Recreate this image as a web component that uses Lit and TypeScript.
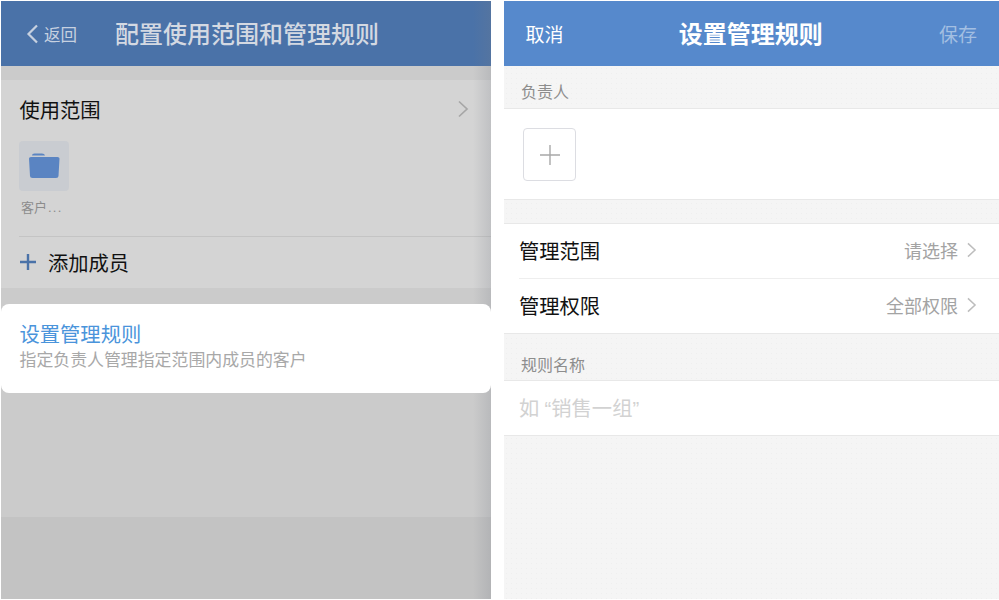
import { LitElement, html, css } from "lit";
import { customElement } from "lit/decorators.js";

const chevron = () => html`<svg viewBox="0 0 12 18" fill="none" stroke="currentColor" stroke-width="1.7"><path d="M2 1.5 L10 9 L2 16.5"/></svg>`;

@customElement("app-root")
export class AppRoot extends LitElement {
  static styles = css`
    :host { display: block; width: 999px; height: 600px; background: #fff; overflow: hidden;
      font-family: "Noto Sans CJK SC", "Liberation Sans", sans-serif; }
    .page { display: flex; height: 600px; box-sizing: border-box; padding: 1px 0 1px 1px; gap: 13px; }
    .left { width: 490px; flex: none; display: flex; flex-direction: column; background: #cbcbcb; position: relative; }
    .right { flex: 1; display: flex; flex-direction: column; background-color: #f5f5f5;
      background-image: radial-gradient(#efefef 0.6px, transparent 0.7px); background-size: 5px 5px; }
    .header { height: 65px; flex: none; display: flex; align-items: center; color: #fff; }
    .left .header { background: #4a72a8; color: #d8dde6; }
    .right .header { background: #5689cc; justify-content: space-between; padding: 0 22px 0 21.5px; }
    .back { display: flex; align-items: center; width: 114px; padding-left: 25px; box-sizing: border-box; gap: 5px; font-size: 16.5px; color: #c7d1e0; flex: none; }
    .back svg { width: 13px; height: 20px; }
    .ltitle { font-size: 24px; font-weight: 500; color: #d4d9e2; margin-bottom: 3px; }
    .rtitle { font-size: 24px; font-weight: 700; margin-bottom: 3px; margin-left: -1px; }
    .hbtn { font-size: 19px; }
    .hbtn.off { color: #a3bfe2; }
    .card { margin-top: 14px; background: #d4d4d4; height: 208px; flex: none; display: flex; flex-direction: column; }
    .rowtop { height: 61px; box-sizing: border-box; padding: 0 22px 3px 18.5px; flex: none; display: flex; align-items: center; justify-content: space-between; font-size: 20.3px; color: #111; }
    .rowtop svg { width: 12px; height: 18px; color: #a6a6a6; }
    .thumb { width: 50px; height: 50px; border-radius: 4px; background: #c9ccd1; margin-left: 18px; display: flex; align-items: center; justify-content: center; }
    .thumb svg { width: 32px; height: 28px; }
    .cap { font-size: 13px; color: #8c8c8c; margin: 6px 0 0 20px; line-height: 19px; }
    .dots { font-family: "Liberation Sans", sans-serif; letter-spacing: 1.2px; margin-left: 1px; }
    .add { margin: 19px 0 0 18px; padding-bottom: 1px; border-top: 1px solid #c4c4c4; display: flex; align-items: center; flex: 1; gap: 11px; font-size: 20.3px; color: #111; }
    .add svg { width: 18px; height: 18px; color: #4a72a8; }
    .pop { margin-top: 16px; height: 89px; background: #fff; border-radius: 8px; flex: none; box-sizing: border-box; padding: 16px 18.5px; z-index: 1; position: relative; }
    .pop .t { font-size: 20.3px; line-height: 27px; color: #4a94db; }
    .pop .s { font-size: 16.9px; line-height: 23px; color: #a8a8a8; white-space: nowrap; }
    .spacer { height: 124px; flex: none; }
    .footer { flex: 1; background: #c3c3c3; }
    .shade { position: absolute; top: 0; bottom: 0; right: 0; width: 18px; pointer-events: none;
      background: linear-gradient(to right, rgba(120,125,135,0), rgba(120,125,135,0.22)); }
    .label { height: 43px; box-sizing: border-box; padding: 14px 0 0 17px; font-size: 16px; line-height: 22px; color: #8d8d8d; border-bottom: 1px solid #e8e8e8; flex: none; }
    .label.second { height: 47px; padding-top: 19px; }
    .white { background: #fff; }
    .owner { height: 91px; border-bottom: 1px solid #e8e8e8; box-sizing: border-box; padding: 19px 0 0 19px; flex: none; }
    .plus { width: 53px; height: 53px; box-sizing: border-box; border: 1px solid #dcdde2; border-radius: 4px; display: flex; align-items: center; justify-content: center; }
    .plus svg { width: 20px; height: 20px; color: #a8a8a8; }
    .group { margin-top: 23px; border-top: 1px solid #e8e8e8; border-bottom: 1px solid #e8e8e8; background: #fff; flex: none; }
    .row { height: 54px; box-sizing: border-box; display: flex; align-items: center; justify-content: space-between; padding: 0 22px 2px 15px; font-size: 20.3px; color: #111; }
    .row + .row { border-top: 1px solid #eeeeee; margin-left: 15px; padding-left: 0; height: 55px; }
    .val { display: flex; align-items: center; gap: 8px; font-size: 18px; color: #a3a3a3; }
    .val svg { width: 11px; height: 16px; color: #bdbdbd; }
    .input { height: 55px; box-sizing: border-box; border-bottom: 1px solid #e8e8e8; display: flex; align-items: center; padding: 0 0 3px 15px; font-size: 20.3px; color: #d2d2d2; flex: none; }
    .q { font-family: "Liberation Sans", sans-serif; display: inline-block; width: 12px; text-align: right; }
    .q.end { text-align: left; width: 10px; }
  `;

  render() {
    return html`<div class="page">
      <section class="left">
        <div class="header">
          <div class="back"><svg viewBox="0 0 13 20" fill="none" stroke="currentColor" stroke-width="2.2"><path d="M11 1.5 L2.5 10 L11 18.5"/></svg>返回</div>
          <div class="ltitle">配置使用范围和管理规则</div>
        </div>
        <div class="card">
          <div class="rowtop">使用范围 ${chevron()}</div>
          <div class="thumb"><svg viewBox="0 0 32 28"><path fill="#5a84c2" d="M4 3.5 Q4 1.5 6.5 1.5 H14 Q16.5 1.5 17 3.5 Z"/><path fill="#5a84c2" d="M1 6.5 Q1 5 3 5 H29.5 Q31.5 5 31.5 6.5 L30.5 24 Q30.5 26 28 26 H4.5 Q2 26 2 24 Z"/></svg></div>
          <div class="cap">客户<span class="dots">...</span></div>
          <div class="add"><svg viewBox="0 0 18 18" fill="none" stroke="currentColor" stroke-width="2.4"><path d="M9 1 V17 M1 9 H17"/></svg>添加成员</div>
        </div>
        <div class="pop">
          <div class="t">设置管理规则</div>
          <div class="s">指定负责人管理指定范围内成员的客户</div>
        </div>
        <div class="spacer"></div>
        <div class="footer"></div>
        <div class="shade"></div>
      </section>
      <section class="right">
        <div class="header"><span class="hbtn">取消</span><span class="rtitle">设置管理规则</span><span class="hbtn off">保存</span></div>
        <div class="label">负责人</div>
        <div class="owner white"><div class="plus"><svg viewBox="0 0 20 20" fill="none" stroke="currentColor" stroke-width="1.4"><path d="M10 0 V20 M0 10 H20"/></svg></div></div>
        <div class="group">
          <div class="row">管理范围<span class="val">请选择 ${chevron()}</span></div>
          <div class="row">管理权限<span class="val">全部权限 ${chevron()}</span></div>
        </div>
        <div class="label second">规则名称</div>
        <div class="input white"><span>如<span class="q">“</span>销售一组<span class="q end">”</span></span></div>
      </section>
    </div>`;
  }
}
